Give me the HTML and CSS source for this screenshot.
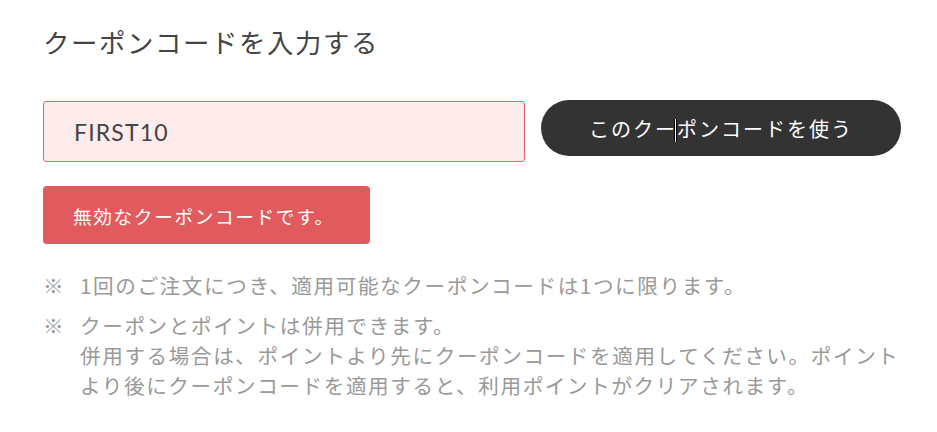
FILE: index.html
```html
<!DOCTYPE html>
<html lang="ja">
<head>
  <meta charset="utf-8">
  <title>クーポンコード</title>
  <link rel="stylesheet" href="styles.css">
</head>
<body>
<div class="coupon">
  <h2 class="coupon-title">クーポンコードを入力する</h2>

  <div class="coupon-form">
    <input type="text" class="coupon-input" value="FIRST10">
    <button class="coupon-submit">このクー<span class="text-cursor"></span>ポンコードを使う</button>
  </div>

  <div class="coupon-error">無効なクーポンコードです。</div>

  <ul class="coupon-notes">
    <li><span class="mark">※</span><span>1回のご注文につき、適用可能なクーポンコードは1つに限ります。</span></li>
    <li><span class="mark">※</span><span>クーポンとポイントは併用できます。<br>併用する場合は、ポイントより先にクーポンコードを適用してください。ポイントより後にクーポンコードを適用すると、利用ポイントがクリアされます。</span></li>
  </ul>
</div>
</body>
</html>
```

FILE: styles.css
```css
body {
  margin: 0;
  font-family: "Noto Sans CJK JP", "Noto Sans", sans-serif;
  color: #444;
  background: #fff;
}

.coupon {
  padding: 23px 26px 0 43px;
  letter-spacing: 0.1em;
}

.coupon-title {
  margin: 0;
  font-size: 26.4px;
  font-weight: normal;
  line-height: 38px;
  color: #444;
}

.coupon-form {
  display: flex;
  align-items: flex-start;
  gap: 16px;
  margin-top: 39px;
}

.coupon-input {
  box-sizing: border-box;
  width: 482px;
  height: 61px;
  margin-top: 1px;
  padding: 0 0 0 30px;
  border: 1px solid #e5676a;
  border-radius: 3px;
  background: #feebec;
  font-family: Lato, sans-serif;
  font-size: 23px;
  letter-spacing: 0.05em;
  color: #444;
}

.coupon-submit {
  width: 360px;
  height: 56px;
  border: none;
  border-radius: 28px;
  background: #333;
  color: #fff;
  font-family: "Noto Sans CJK JP", sans-serif;
  font-size: 20px;
  letter-spacing: 0.1em;
  cursor: pointer;
}

.text-cursor {
  position: relative;
  display: inline-block;
  width: 0;
  height: 1em;
  vertical-align: middle;
}

.text-cursor::before {
  content: "";
  position: absolute;
  left: -2px;
  top: -2px;
  width: 1px;
  height: 23px;
  background: #fff;
  box-shadow: 1px 0 0 #000, -1px 0 0 #000;
}

.coupon-error {
  box-sizing: border-box;
  width: 327px;
  height: 58px;
  margin-top: 24px;
  padding-left: 30px;
  display: flex;
  align-items: center;
  border-radius: 4px;
  background: #e15b5e;
  color: #fff;
  font-size: 18.7px;
}

.coupon-notes {
  list-style: none;
  margin: 26px 0 0;
  padding: 0;
  color: #999;
  font-size: 20.6px;
  line-height: 30px;
}

.coupon-notes li {
  display: flex;
  margin-bottom: 10px;
}

.coupon-notes .mark {
  flex: none;
  width: 37px;
}
```
